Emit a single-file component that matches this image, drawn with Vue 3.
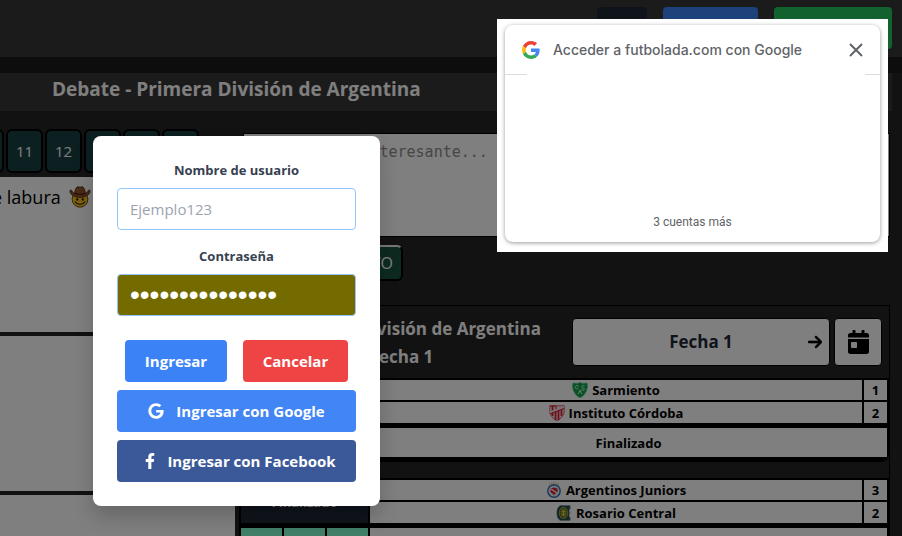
<script setup>
import { ref } from 'vue'

const username = ref('')
const password = ref('futbolada-clave')
const comment = ref('')
const pages = ['10', '11', '12', '13', '14', '15']
const matches = [
  {
    status: '',
    teams: [
      { name: 'Sarmiento', crest: 'sarmiento', goals: 1 },
      { name: 'Instituto Córdoba', crest: 'instituto', goals: 2 }
    ],
    result: 'Finalizado'
  },
  {
    status: 'Finalizado',
    teams: [
      { name: 'Argentinos Juniors', crest: 'argentinos', goals: 3 },
      { name: 'Rosario Central', crest: 'rosario', goals: 2 }
    ],
    result: ''
  }
]
</script>

<template>
  <div class="page">
    <header class="topbar">
      <button class="top-btn navy" type="button" aria-label="Menú"></button>
      <button class="top-btn blue" type="button" aria-label="Ingresar"></button>
      <button class="top-btn green" type="button" aria-label="Registrarse"></button>
    </header>

    <main class="content">
      <h1 class="title">Debate - Primera División de Argentina</h1>
      <div class="columns">
        <section class="thread">
          <nav class="pages">
            <button v-for="p in pages" :key="p" type="button" class="page-btn">{{ p }}</button>
          </nav>
          <article class="post">
            <p class="post-text">
              <span>e labura</span>
              <svg class="cowboy" viewBox="0 0 24 24" aria-hidden="true">
                <circle cx="12" cy="14.5" r="8.6" fill="#fcc21b" stroke="#5a3a10" stroke-width="1" />
                <path d="M1 5.500c0 3.800 4.500 6.800 11 6.800s11-3 11-6.800c0-1.500-1.800-1.500-2.300 0-.6 1.500-1.700 2.200-2.900 2.500C17.600 4 16 .8 14.300.8c-1 0-1.400.7-2.300.7S10.700.8 9.700.8C8 .8 6.400 4 6.200 8 5 7.700 3.900 7 3.300 5.500 2.800 4 1 4 1 5.500z" fill="#98562e" stroke="#3c2010" stroke-width=".9" />
                <path d="M6.200 8c3.500 1.500 8 1.500 11.600 0" fill="none" stroke="#4a2512" stroke-width="1.300" />
                <ellipse cx="9" cy="14.600" rx="1.200" ry="1.500" fill="#33200a" />
                <ellipse cx="15" cy="14.600" rx="1.200" ry="1.500" fill="#33200a" />
                <path d="M7 17.500c2 3.500 8 3.500 10 0" fill="none" stroke="#3c2010" stroke-width="1.400" stroke-linecap="round" />
              </svg>
            </p>
          </article>
          <article class="post"></article>
          <article class="post"></article>
        </section>

        <section class="side">
          <textarea v-model="comment" class="comment" aria-label="Comentario" placeholder="Escribe algo interesante..."></textarea>
          <button type="button" class="live">MODO EN VIVO</button>

          <div class="fixture">
            <div class="fixture-head">
              <h2 class="fixture-title">La Primera División de Argentina<br />Fecha 1</h2>
              <div class="round">
                <span class="round-name">Fecha 1</span>
                <button type="button" class="next" aria-label="Fecha siguiente">
                  <svg viewBox="0 0 448 512" width="14" height="16" aria-hidden="true"><path stroke="#000" stroke-width="20" d="M438.600 278.600c12.500-12.500 12.500-32.800 0-45.300l-160-160c-12.500-12.500-32.800-12.500-45.300 0s-12.500 32.800 0 45.300L338.800 224 32 224c-17.700 0-32 14.300-32 32s14.300 32 32 32l306.700 0L233.400 393.400c-12.500 12.500-12.500 32.800 0 45.300s32.800 12.500 45.300 0l160-160z" /></svg>
                </button>
              </div>
              <button type="button" class="calendar" aria-label="Calendario">
                <svg viewBox="0 0 448 512" width="21" height="24" aria-hidden="true"><path d="M0 464c0 26.500 21.500 48 48 48h352c26.500 0 48-21.500 48-48V192H0v272zm64-192c0-8.800 7.200-16 16-16h96c8.800 0 16 7.200 16 16v96c0 8.800-7.200 16-16 16H80c-8.800 0-16-7.200-16-16v-96zM400 64h-48V16c0-8.800-7.200-16-16-16h-32c-8.800 0-16 7.200-16 16v48H160V16c0-8.800-7.200-16-16-16h-32c-8.800 0-16 7.200-16 16v48H48C21.500 64 0 85.500 0 112v48h448v-48c0-26.500-21.500-48-48-48z" /></svg>
              </button>
            </div>

            <table v-for="(m, i) in matches" :key="i" class="match">
              <colgroup>
                <col class="c-odd" /><col class="c-odd" /><col class="c-odd" /><col /><col class="c-goals" />
              </colgroup>
              <tbody>
                <tr v-for="(t, j) in m.teams" :key="t.name">
                  <th v-if="j === 0" class="status" colspan="3" rowspan="2">{{ m.status }}</th>
                  <td class="team" :class="{ second: j === 1 }">
                    <span class="team-in">
                      <svg v-if="t.crest === 'sarmiento'" class="crest" viewBox="0 0 16 16" aria-hidden="true">
                        <path d="M1 .8c2 .8 4.500.8 7-.3 2.500 1.100 5 1.100 7 .3l.5 3.500C15 10 12 14 8 15.700 4 14 1 10 .5 4.300z" fill="#0fa349" stroke="#65c98c" stroke-width=".8" />
                        <path d="M6.500 4C4.500 3 3 4 3.300 5.500s2 1.700 3.200.8M12.500 4c-2-1-3.200.2-2.700 1.200s2.700.6 2.500 2-1.800 1.200-3 .6M6.300 12l1.700-4 1.700 4" fill="none" stroke="#d8f5e2" stroke-width="1" />
                      </svg>
                      <svg v-else-if="t.crest === 'instituto'" class="crest" viewBox="0 0 16 16" aria-hidden="true">
                        <path d="M.7.7h14.600v5C15.300 10 12 14 8 15.600 4 14 .7 10 .7 5.700z" fill="#f5dede" stroke="#d24a55" stroke-width=".8" />
                        <path d="M3.500 1v10M6.500 5v10M9.500 4v11M12.500 2v9" stroke="#d61c35" stroke-width="1.700" />
                        <path d="M1 7.500 15 2" stroke="#f8e8e8" stroke-width="2" />
                        <path d="M1 8.800 15 3.500M1 1h6v3" fill="none" stroke="#d61c35" stroke-width="1" />
                      </svg>
                      <svg v-else-if="t.crest === 'argentinos'" class="crest" viewBox="0 0 16 16" aria-hidden="true">
                        <circle cx="8" cy="9" r="6.200" fill="#e8eef5" stroke="#2f6fb3" stroke-width="1.400" />
                        <path d="M4.500 6.500 8 5.500l3.500 1v3.500L8 13l-3.500-3z" fill="#df2440" />
                        <path d="m5 7 6 4" stroke="#fff" stroke-width="1.200" />
                        <path d="M3 2h1M5.300 1h1M7.500.7h1M9.700 1h1M12 2h1" stroke="#c9a548" stroke-width="1.200" />
                      </svg>
                      <svg v-else class="crest" viewBox="0 0 16 16" aria-hidden="true">
                        <path d="M4 .7h10v3l-1 1v7l1 1v2.600H4C1.500 13.500 1 11 1 8s.5-5.500 3-7.300z" fill="#1c4a52" stroke="#3d6670" stroke-width=".6" />
                        <ellipse cx="7.500" cy="8" rx="4.700" ry="5.900" fill="#c2b52c" />
                        <ellipse cx="7.500" cy="8" rx="3.400" ry="4.600" fill="#8d8c2c" stroke="#255057" stroke-width=".7" />
                        <path d="M5.500 6.500h4M7.500 5v6M5.500 9.500h4" stroke="#d8cb3a" stroke-width="1" />
                        <path d="M13 2.500h1.800M13 8h1.500M13 13.500h1.800" stroke="#7d8a3a" />
                      </svg>
                      <span>{{ t.name }}</span>
                    </span>
                  </td>
                  <td class="goals">{{ t.goals }}</td>
                </tr>
                <tr>
                  <td class="odd"></td>
                  <td class="odd"></td>
                  <td class="odd"></td>
                  <td class="result" colspan="2">{{ m.result }}</td>
                </tr>
              </tbody>
            </table>
          </div>
        </section>
      </div>
    </main>

    <div class="backdrop">
      <form class="modal" @submit.prevent>
        <label class="label" for="user">Nombre de usuario</label>
        <input id="user" v-model="username" class="field" type="text" placeholder="Ejemplo123" />
        <label class="label" for="pass">Contraseña</label>
        <input id="pass" v-model="password" class="field secret" type="password" />
        <div class="actions">
          <button type="submit" class="btn enter">Ingresar</button>
          <button type="button" class="btn cancel">Cancelar</button>
        </div>
        <button type="button" class="btn google">
          <svg viewBox="0 0 488 512" width="16" height="16" aria-hidden="true"><path d="M488 261.800C488 403.300 391.100 504 248 504 110.800 504 0 393.200 0 256S110.800 8 248 8c66.800 0 123 24.500 166.300 64.900l-67.500 64.900C258.500 52.600 94.300 116.600 94.300 256c0 86.500 69.100 156.600 153.700 156.600 98.200 0 135-70.400 140.800-106.900H248v-85.300h236.100c2.300 12.700 3.900 24.900 3.900 41.400z" /></svg>
          <span>Ingresar con Google</span>
        </button>
        <button type="button" class="btn facebook">
          <svg viewBox="0 0 320 512" width="10" height="16" aria-hidden="true"><path d="M279.140 288l14.220-92.660h-88.910v-60.130c0-25.350 12.420-50.060 52.240-50.060h40.420V6.260S260.430 0 225.360 0c-73.220 0-121.080 44.380-121.080 124.720v70.620H22.890V288h81.390v224h100.170V288z" /></svg>
          <span>Ingresar con Facebook</span>
        </button>
      </form>
    </div>

    <aside class="onetap">
      <div class="card">
        <div class="card-head">
          <svg viewBox="0 0 48 48" width="18" height="18" aria-hidden="true">
            <path fill="#EA4335" d="M24 9.500c3.540 0 6.710 1.220 9.210 3.600l6.850-6.850C35.900 2.380 30.470 0 24 0 14.620 0 6.510 5.380 2.560 13.220l7.980 6.190C12.430 13.720 17.740 9.500 24 9.500z" />
            <path fill="#4285F4" d="M46.980 24.550c0-1.570-.15-3.090-.38-4.550H24v9.020h12.940c-.58 2.960-2.260 5.480-4.780 7.180l7.730 6c4.510-4.180 7.090-10.360 7.090-17.650z" />
            <path fill="#FBBC05" d="M10.530 28.590c-.48-1.450-.76-2.990-.76-4.590s.27-3.140.76-4.590l-7.980-6.190C.92 16.460 0 20.120 0 24c0 3.880.92 7.540 2.560 10.780l7.970-6.190z" />
            <path fill="#34A853" d="M24 48c6.480 0 11.930-2.130 15.890-5.810l-7.730-6c-2.150 1.450-4.920 2.300-8.160 2.300-6.260 0-11.570-4.220-13.470-9.910l-7.980 6.190C6.510 42.620 14.620 48 24 48z" />
          </svg>
          <span class="card-title">Acceder a futbolada.com con Google</span>
          <button type="button" class="close" aria-label="Cerrar">
            <svg viewBox="0 0 14 14" width="14" height="14" aria-hidden="true"><path d="m1 1 12 12M13 1 1 13" stroke="#5f6368" stroke-width="2" /></svg>
          </button>
        </div>
        <div class="rule"><span></span><span></span></div>
        <p class="more">3 cuentas más</p>
      </div>
    </aside>
  </div>
</template>

<style>
body {
  background: #242424;
}
</style>

<style scoped>
.page {
  position: relative;
  height: 100vh;
  overflow: hidden;
  font-family: "Open Sans", "Noto Sans", sans-serif;
  font-size: 16px;
  line-height: 24px;
}
.page *,
.page {
  box-sizing: border-box;
}
h1, h2, p {
  margin: 0;
}
button, input, textarea {
  font-family: inherit;
  margin: 0;
}
button {
  cursor: pointer;
  border: 0;
  padding: 0;
}
.topbar {
  display: flex;
  justify-content: flex-end;
  gap: 16px;
  height: 57px;
  padding: 7px 10px 8px;
  background: #363636;
}
.top-btn {
  height: 42px;
  border-radius: 4px;
}
.navy { width: 50px; background: #1f2937; }
.blue { width: 95px; background: #3b82f6; }
.green { width: 118px; background: #22c55e; }
.content {
  border-top: 16px solid #1a1a1a;
}
.title {
  height: 38px;
  margin-right: 10px;
  padding-left: 52px;
  background: #363636;
  color: #fff;
  font-size: 19px;
  line-height: 33px;
  font-weight: 700;
}
.columns {
  display: grid;
  grid-template-columns: 235px 1fr;
}
.thread {
  padding-top: 18px;
  overflow: hidden;
}
.pages {
  display: flex;
  justify-content: flex-end;
  gap: 2px;
  padding: 0 36px 4px 0;
}
.page-btn {
  flex: none;
  width: 37px;
  height: 44px;
  border: 2px solid #000;
  border-radius: 6px;
  background: #184044;
  color: #fff;
  font-size: 15px;
}
.post {
  height: 159px;
  background: #fff;
  border-bottom: 4px solid #222;
}
.post-text {
  display: flex;
  align-items: center;
  gap: 8px;
  margin-left: -8px;
  padding-top: 8px;
  color: #000;
  font-size: 18px;
  white-space: nowrap;
}
.cowboy {
  width: 22px;
  height: 22px;
}
.side {
  padding: 22px 12px 0 0;
}
.comment {
  display: block;
  width: calc(100% - 8px);
  height: 104px;
  margin-left: 8px;
  padding: 9px 0;
  border: 1px solid #000;
  background: #fff;
  font-family: "DejaVu Sans Mono", monospace;
  font-size: 15px;
  resize: none;
}
.comment::placeholder {
  color: #8c8c8c;
}
.live {
  display: block;
  height: 36px;
  width: 158px;
  margin: 8px 0 24px 10px;
  padding-right: 8px;
  border: 2px outset #fff;
  border-color: #eee #000 #000 #eee;
  border-radius: 6px;
  background: #1a5540;
  color: #fff;
  font-size: 16px;
  text-align: right;
}
.fixture {
  border: 1px solid #000;
  border-left: 0;
}
.fixture-head {
  display: flex;
  gap: 4px;
  height: 72px;
  padding: 12px 7px 12px 0;
}
.fixture-title {
  flex: 1;
  margin-top: -3px;
  color: #fff;
  font-size: 17px;
  line-height: 28px;
  font-weight: 700;
  text-align: center;
  white-space: nowrap;
}
.round {
  display: flex;
  align-items: center;
  width: 258px;
  height: 48px;
  padding: 0 7px 0 21px;
  border: 1px solid #000;
  border-radius: 4px;
  background: #fff;
}
.round-name {
  flex: 1;
  color: #1f2937;
  font-size: 17px;
  font-weight: 700;
  text-align: center;
}
.next {
  display: flex;
  background: none;
}
.calendar {
  display: flex;
  align-items: center;
  justify-content: center;
  width: 48px;
  height: 48px;
  border: 1px solid #000;
  border-radius: 4px;
  background: #fff;
}
.match {
  width: calc(100% - 4px);
  margin: 0 0 16px 4px;
  table-layout: fixed;
  border-spacing: 2px;
  background: #000;
  border-radius: 0 0 8px 8px;
  color: #000;
  font-size: 13px;
  line-height: 20px;
  font-weight: 700;
  text-align: center;
}
.match td, .match th {
  padding: 0;
}
.c-odd { width: 41px; }
.c-goals { width: 23px; }
.status {
  background: #1f2937;
  color: #fff;
}
.team, .goals {
  height: 20px;
  background: #fff;
}
.second, .second + .goals {
  height: 21px;
}
.team-in {
  display: flex;
  align-items: center;
  justify-content: center;
  gap: 4px;
}
.crest {
  width: 16px;
  height: 16px;
}
.odd, .result {
  height: 35px;
  border: solid #000;
  border-width: 3px 0;
  background: #fff;
}
.odd {
  background: #84ffd2;
}
.backdrop {
  position: absolute;
  inset: 0;
  padding: 136px 0 0 93px;
  background: rgba(0, 0, 0, 0.5);
}
.modal {
  display: flex;
  flex-direction: column;
  gap: 8px;
  width: 287px;
  padding: 24px;
  border-radius: 8px;
  background: #fff;
  box-shadow: 0 10px 20px rgba(0, 0, 0, 0.2);
}
.label {
  height: 20px;
  color: #374151;
  font-size: 13px;
  line-height: 20px;
  font-weight: 700;
  text-align: center;
}
.field {
  width: 100%;
  height: 42px;
  margin-bottom: 8px;
  padding: 0 12px;
  border: 1px solid #93c5fd;
  border-radius: 4px;
  background: #fff;
  color: #374151;
  font-size: 15px;
}
.field::placeholder {
  color: #9ca3af;
}
.secret {
  background: #746b00;
  color: #fff;
  font-family: "Liberation Sans", sans-serif;
  font-size: 28px;
}
.actions {
  display: flex;
  gap: 16px;
  padding: 8px 8px 0;
}
.btn {
  display: flex;
  align-items: center;
  justify-content: center;
  height: 42px;
  border-radius: 4px;
  color: #fff;
  fill: #fff;
  font-size: 15px;
  font-weight: 700;
}
.enter { width: 102px; background: #3b82f6; }
.cancel { flex: 1; background: #ef4444; }
.google { gap: 12px; background: #4285f4; }
.facebook { gap: 12px; padding-left: 8px; background: #3b5998; }
.onetap {
  position: absolute;
  top: 19px;
  right: 14px;
  width: 391px;
  height: 233px;
  padding: 6px 8px 10px;
  background: #fff;
}
.card {
  display: flex;
  flex-direction: column;
  height: 100%;
  border-radius: 8px;
  box-shadow: 0 1px 4px rgba(0, 0, 0, 0.4);
}
.card-head {
  display: flex;
  align-items: center;
  height: 49px;
  padding: 0 17px;
}
.card-title {
  flex: 1;
  margin-left: 13px;
  color: #5f6368;
  font-family: Inter, sans-serif;
  font-size: 14px;
  font-weight: 500;
}
.close {
  display: flex;
  background: none;
}
.rule {
  display: flex;
  justify-content: space-between;
}
.rule span {
  width: 22px;
  height: 1px;
  background: #dadce0;
}
.rule span + span {
  width: 15px;
}
.more {
  margin-top: auto;
  padding-bottom: 12px;
  color: #5f6368;
  font-family: Roboto, sans-serif;
  font-size: 12px;
  line-height: 16px;
  text-align: center;
}
</style>
